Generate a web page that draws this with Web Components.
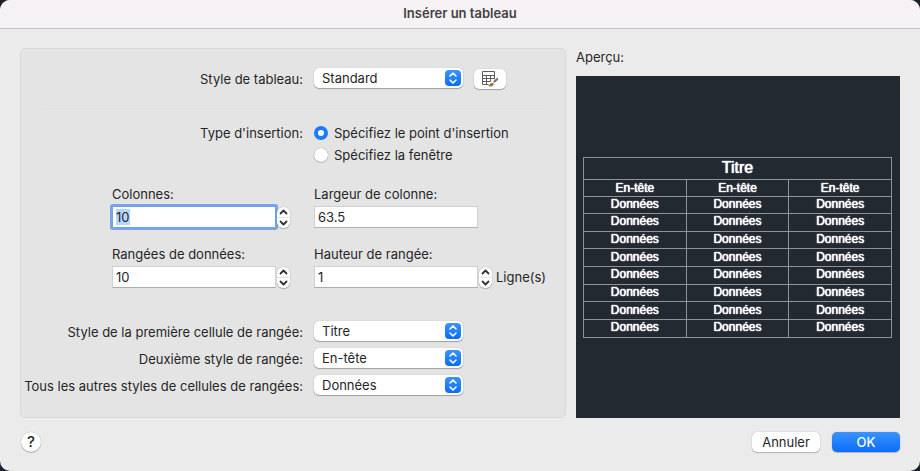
<!DOCTYPE html>
<html lang="fr">
<head>
<meta charset="utf-8">
<title>Insérer un tableau</title>
<style>
  html { background: #1c202d; }
  body {
    margin: 0;
    font: 13px/20px Inter, "Noto Sans", sans-serif;
    color: #262626;
  }
</style>
</head>
<body>
<insert-table-dialog></insert-table-dialog>

<script>
const define = (name, markup, setup) => {
  const template = document.createElement('template');
  template.innerHTML = markup;
  customElements.define(name, class extends HTMLElement {
    constructor() {
      super();
      this.attachShadow({ mode: 'open' }).append(template.content.cloneNode(true));
    }
    connectedCallback() {
      if (setup && !this.ready) { this.ready = true; setup(this, this.shadowRoot); }
    }
  });
};

/* Pop-up menu with its label on the left */
define('popup-field', `
  <style>
    :host { display: grid; grid-template-columns: 282px 149px 1fr; column-gap: 11px; align-items: start; }
    label { text-align: right; line-height: 22px; white-space: nowrap; }
    .menu { display: grid; }
    .menu > * { grid-area: 1 / 1; }
    select {
      appearance: none; box-sizing: border-box; width: 100%; height: 20px; margin: 0;
      padding: 0 28px 0 8px; border: 0; border-radius: 5px; background: #fff;
      box-shadow: 0 0 1px rgba(0,0,0,.3), 0 1px 1px rgba(0,0,0,.28);
      font: inherit; line-height: 20px; color: inherit;
    }
    svg { justify-self: end; align-self: center; margin-right: 2px; pointer-events: none; }
    ::slotted(*) { justify-self: start; }
  </style>
  <label for="menu"></label>
  <div class="menu">
    <select id="menu"></select>
    <svg width="16" height="16" viewBox="0 0 16 16" aria-hidden="true">
      <defs><linearGradient id="blue" x2="0" y2="1"><stop stop-color="#3b93fb"/><stop offset="1" stop-color="#0a6dfb"/></linearGradient></defs>
      <rect width="16" height="16" rx="4" fill="url(#blue)"/>
      <path d="M5 6 8 3l3 3M5 10l3 3 3-3" fill="none" stroke="#fff" stroke-width="1.6" stroke-linecap="round" stroke-linejoin="round"/>
    </svg>
  </div>
  <slot></slot>`,
(host, root) => {
  root.querySelector('label').textContent = host.getAttribute('label');
  const value = host.getAttribute('value');
  root.querySelector('select').add(new Option(value, value, true, true));
});

/* Small push button that opens the table style editor */
define('style-button', `
  <style>
    :host { display: block; margin-top: 1px; }
    button {
      display: grid; place-items: center; width: 32px; height: 20px; padding: 0; border: 0;
      border-radius: 5px; background: #fff;
      box-shadow: 0 0 1px rgba(0,0,0,.3), 0 1px 1px rgba(0,0,0,.28);
    }
  </style>
  <button type="button" aria-label="Modifier le style de tableau">
    <svg width="18" height="18" viewBox="0 0 18 18" aria-hidden="true">
      <path d="M1.500 1.500h12v13h-12zM1.500 5.500h12M1.500 8.500h12M1.500 11.500h12M5.500 5.500v9M9.500 5.500v9" fill="none" stroke="#5c5c5c"/>
      <path d="M6 17l3-5 4-2.500 4-2.500v5l-4 3v2z" fill="#fff"/>
      <path d="M7 15.600c1.600-.2 1.700-2.300 3.600-2.700 1.700-.3 2.700 1 1.800 2.200-1 1.600-3.900 2.200-5.400.5z" fill="#a8702c"/>
      <path d="M12.300 12.600 13.700 11.300" stroke="#c9c9c9" stroke-width="2"/>
      <path d="M13.700 11.300 16.300 9" stroke="#6d6d6d" stroke-width="2" stroke-linecap="round"/>
    </svg>
  </button>`);

/* Choice between the two ways of placing the table */
define('insertion-type', `
  <style>
    :host { display: grid; grid-template-columns: 282px 1fr; column-gap: 11px; line-height: 22px; }
    #title { text-align: right; }
    label { display: flex; align-items: center; gap: 6px; }
    input {
      appearance: none; box-sizing: border-box; width: 14px; height: 14px; margin: 0; border-radius: 50%;
      background: #fff; box-shadow: 0 0 1px rgba(0,0,0,.5), 0 1px 1px rgba(0,0,0,.12);
    }
    input:checked { border: 4px solid #1a7cfb; box-shadow: none; }
  </style>
  <div id="title">Type d'insertion:</div>
  <div role="radiogroup" aria-labelledby="title">
    <label><input type="radio" name="type" checked>Spécifiez le point d'insertion</label>
    <label><input type="radio" name="type">Spécifiez la fenêtre</label>
  </div>`);

/* Text box with its label above, and an optional stepper and unit */
define('value-field', `
  <style>
    :host { display: block; }
    label { display: block; margin-bottom: 2px; }
    .row { display: flex; align-items: center; gap: 1px; }
    input {
      box-sizing: border-box; width: 164px; height: 22px; margin: 0; padding: 0 3px;
      border: 1px solid #d0d0d0; border-bottom-color: #adadad; background: #fff;
      font: inherit; color: inherit; outline: 0;
    }
    :host([active]) input { border-color: #6f9ff0; box-shadow: 0 0 0 2px #7ba3ea; border-radius: 1px; }
    input::selection { background: #b3d7ff; color: #262626; }
    .stepper {
      display: flex; flex-direction: column; width: 13px; height: 21px; border-radius: 6px;
      overflow: hidden; background: #fff; box-shadow: 0 0 1px rgba(0,0,0,.35), 0 1px 1px rgba(0,0,0,.22);
    }
    .stepper button { display: grid; place-items: center; flex: 1; padding: 0; border: 0; background: none; }
    .stepper button + button { border-top: 1px solid #e2e2e2; }
    path { fill: none; stroke: #303030; stroke-width: 1.8; stroke-linecap: round; stroke-linejoin: round; }
    .unit { margin-left: 3px; }
    :host(:not([stepper])) .stepper, .unit:empty { display: none; }
  </style>
  <label for="value"></label>
  <div class="row">
    <input id="value" type="text">
    <div class="stepper">
      <button type="button" aria-label="Augmenter"><svg width="9" height="6" viewBox="0 0 9 6"><path d="M1.500 4.500l3-3 3 3"/></svg></button>
      <button type="button" aria-label="Diminuer"><svg width="9" height="6" viewBox="0 0 9 6"><path d="M1.500 1.500l3 3 3-3"/></svg></button>
    </div>
    <span class="unit"></span>
  </div>`,
(host, root) => {
  const input = root.querySelector('input');
  root.querySelector('label').textContent = host.getAttribute('label');
  root.querySelector('.unit').textContent = host.getAttribute('unit') || '';
  input.value = host.getAttribute('value');
  const [up, down] = root.querySelectorAll('button');
  up.onclick = () => { input.value = Number(input.value) + 1; };
  down.onclick = () => { input.value = Math.max(1, Number(input.value) - 1); };
  if (host.hasAttribute('active')) {
    input.focus();
    input.select();
  }
});

/* Drawing-area preview of the table */
define('table-preview', `
  <style>
    :host { display: flex; flex-direction: column; }
    h2 { margin: 0 0 9px; font: inherit; }
    .canvas { flex: 1; display: flex; align-items: center; padding: 0 8px 0 7px; background: #222931; }
    table {
      width: 100%; height: 181px; border-collapse: collapse; table-layout: fixed;
      font: 12px/14px "Liberation Sans", Arial, sans-serif; color: #fff; text-align: center;
      text-shadow: 0 0 1px #fff, 0 0 1px #fff;
    }
    th, td { padding: 0; border: 1px solid #8f9296; font-weight: normal; }
    td { padding-bottom: 2px; }
    .title th { height: 21px; font-size: 16px; line-height: 20px; }
    .head th { height: 16px; }
  </style>
  <h2>Aperçu:</h2>
  <div class="canvas">
    <table>
      <thead>
        <tr class="title"><th colspan="3">Titre</th></tr>
        <tr class="head"><th>En-tête</th><th>En-tête</th><th>En-tête</th></tr>
      </thead>
      <tbody></tbody>
    </table>
  </div>`,
(host, root) => {
  root.querySelector('tbody').innerHTML = '<tr><td>Données</td><td>Données</td><td>Données</td></tr>'.repeat(8);
});

define('push-button', `
  <style>
    :host { display: block; }
    button {
      box-sizing: border-box; width: 68px; height: 20px; padding: 0; border: 0; border-radius: 5px;
      background: #fff; font: inherit; color: inherit; line-height: 20px;
      box-shadow: 0 0 1px rgba(0,0,0,.35), 0 1px 1px rgba(0,0,0,.22);
    }
    :host([primary]) button { background: linear-gradient(#3b93fb, #0a6dfb); color: #fff; font-weight: 500; }
    :host([help]) button { width: 20px; border-radius: 50%; font-size: 15px; font-weight: 500; }
  </style>
  <button type="button"><slot></slot></button>`,
(host, root) => {
  if (host.hasAttribute('help')) root.querySelector('button').setAttribute('aria-label', 'Aide');
});

define('insert-table-dialog', `
  <style>
    :host {
      display: flex; flex-direction: column; box-sizing: border-box; min-height: 100vh;
      border-radius: 10px; overflow: hidden; background: #ebebeb;
    }
    header { padding: 3px 0 5px; border-bottom: 1px solid #c6c2c5; background: #f7f2f6; }
    h1 { margin: 0; font-size: 13px; line-height: 20px; font-weight: 600; text-align: center; color: #434143; }
    main {
      flex: 1; display: grid; grid-template-columns: minmax(0, 546fr) minmax(0, 324fr);
      gap: 10px; padding: 0 20px;
    }
    .panel { margin-top: 19px; padding: 19px 0; border: 1px solid #d9d9d9; border-radius: 5px; background: #e4e4e4; }
    hr { height: 1px; margin: 17px 20px 14px; border: 0; background: #e7e7e7; }
    .values { display: grid; grid-template-columns: 202px 1fr; row-gap: 16px; margin: 18px 0 33px 91px; }
    .styles { display: grid; row-gap: 5px; }
    table-preview { margin-top: 18px; }
    footer { display: flex; gap: 12px; padding: 14px 20px 19px 21px; }
    .help { margin-right: auto; }
  </style>
  <header><h1>Insérer un tableau</h1></header>
  <main>
    <section class="panel">
      <popup-field label="Style de tableau:" value="Standard"><style-button></style-button></popup-field>
      <hr>
      <insertion-type></insertion-type>
      <div class="values">
        <value-field label="Colonnes:" value="10" stepper active></value-field>
        <value-field label="Largeur de colonne:" value="63.5"></value-field>
        <value-field label="Rangées de données:" value="10" stepper></value-field>
        <value-field label="Hauteur de rangée:" value="1" unit="Ligne(s)" stepper></value-field>
      </div>
      <div class="styles">
        <popup-field label="Style de la première cellule de rangée:" value="Titre"></popup-field>
        <popup-field label="Deuxième style de rangée:" value="En-tête"></popup-field>
        <popup-field label="Tous les autres styles de cellules de rangées:" value="Données"></popup-field>
      </div>
    </section>
    <table-preview></table-preview>
  </main>
  <footer>
    <push-button class="help" help>?</push-button>
    <push-button>Annuler</push-button>
    <push-button primary>OK</push-button>
  </footer>`);
</script>
</body>
</html>
